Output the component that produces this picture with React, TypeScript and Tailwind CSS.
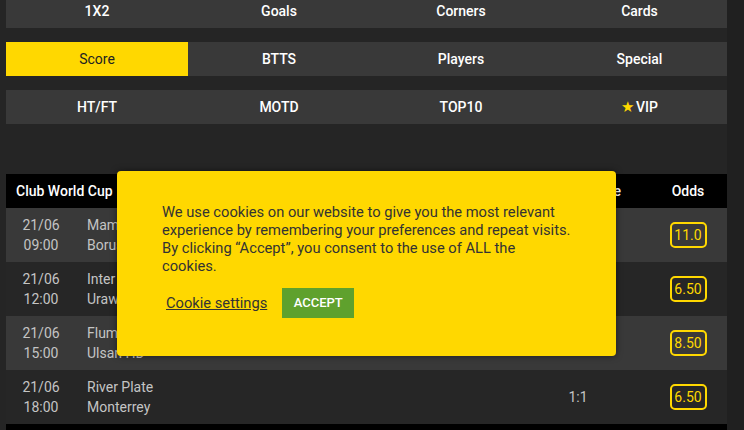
import React from "react";

const tabs = [
  ["1X2", "Goals", "Corners", "Cards"],
  ["Score", "BTTS", "Players", "Special"],
  ["HT/FT", "MOTD", "TOP10", "VIP"],
];

const matches = [
  { d: "21/06", t: "09:00", a: "Mamelodi Sundowns", b: "Borussia Dortmund", s: "1:2", o: "11.0" },
  { d: "21/06", t: "12:00", a: "Inter", b: "Urawa Reds", s: "2:0", o: "6.50" },
  { d: "21/06", t: "15:00", a: "Fluminense", b: "Ulsan HD", s: "2:0", o: "8.50" },
  { d: "21/06", t: "18:00", a: "River Plate", b: "Monterrey", s: "1:1", o: "6.50" },
];

export default function App() {
  return (
    <div
      className="relative w-[744px] h-[430px] overflow-hidden bg-[#202020]"
      style={{ fontFamily: "Roboto, 'Noto Sans', sans-serif" }}
    >
      <div className="w-[727px] h-full bg-[#252525] pl-[6px] flex flex-col">
        <div className="mt-[-6px] flex flex-col gap-[14px]">
          {tabs.map((row, ri) => (
            <div key={ri} className="grid grid-cols-[182px_182px_182px_1fr] h-[34px] bg-[#393939]">
              {row.map((t) => {
                const active = t === "Score";
                return (
                  <div
                    key={t}
                    className={
                      active
                        ? "flex items-center justify-center bg-[#ffd800] text-[#222] text-[14px]"
                        : "flex items-center justify-center text-white text-[14px] font-medium"
                    }
                  >
                    {t === "VIP" && <span className="text-[#ffd800] text-[15px] mr-[2px] leading-none">★</span>}
                    {t}
                  </div>
                );
              })}
            </div>
          ))}
        </div>

        <div className="mt-[50px] flex flex-col">
          <div className="h-[34px] bg-black flex items-center text-white text-[14px] font-medium">
            <div className="flex-1 pl-[10px]">Club World Cup</div>
            <div className="w-[142px] text-right pr-[28px]">Score</div>
            <div className="w-[78px] text-center">Odds</div>
          </div>
          {matches.map((m, i) => (
            <div
              key={i}
              className={
                (i % 2 === 0 ? "bg-[#393939]" : "bg-[#262626]") +
                " h-[54px] flex items-center text-[14px] leading-5 text-[#c4c4c4]"
              }
            >
              <div className="w-[70px] flex flex-col items-center">
                <span>{m.d}</span>
                <span>{m.t}</span>
              </div>
              <div className="flex-1 pl-[11px] flex flex-col">
                <span>{m.a}</span>
                <span>{m.b}</span>
              </div>
              <div className="w-[142px] text-center">{m.s}</div>
              <div className="w-[78px] flex justify-center">
                <div className="w-[37px] h-[26px] border-2 border-[#ffd800] rounded-[5px] flex items-center justify-center text-[#ffd800] text-[14px]">
                  {m.o}
                </div>
              </div>
            </div>
          ))}
          <div className="h-[34px] bg-black" />
        </div>
      </div>

      <div className="absolute left-[117px] top-[171px] w-[499px] h-[185px] bg-[#ffd800] rounded-[4px] shadow-[0_0_6px_rgba(0,0,0,0.5)] pl-[45px] pt-[32px] text-[#333]">
        <p className="w-[440px] text-[14.7px] leading-[18px] whitespace-nowrap">
          We use cookies on our website to give you the most relevant
          <br />
          experience by remembering your preferences and repeat visits.
          <br />
          By clicking “Accept”, you consent to the use of ALL the
          <br />
          cookies.
        </p>
        <div className="mt-[13px] flex items-center">
          <span className="ml-[4px] text-[14.7px] underline">Cookie settings</span>
          <div className="ml-[15px] w-[72px] h-[30px] bg-[#5fa12d] text-white text-[13px] font-medium flex items-center justify-center">
            ACCEPT
          </div>
        </div>
      </div>
    </div>
  );
}
